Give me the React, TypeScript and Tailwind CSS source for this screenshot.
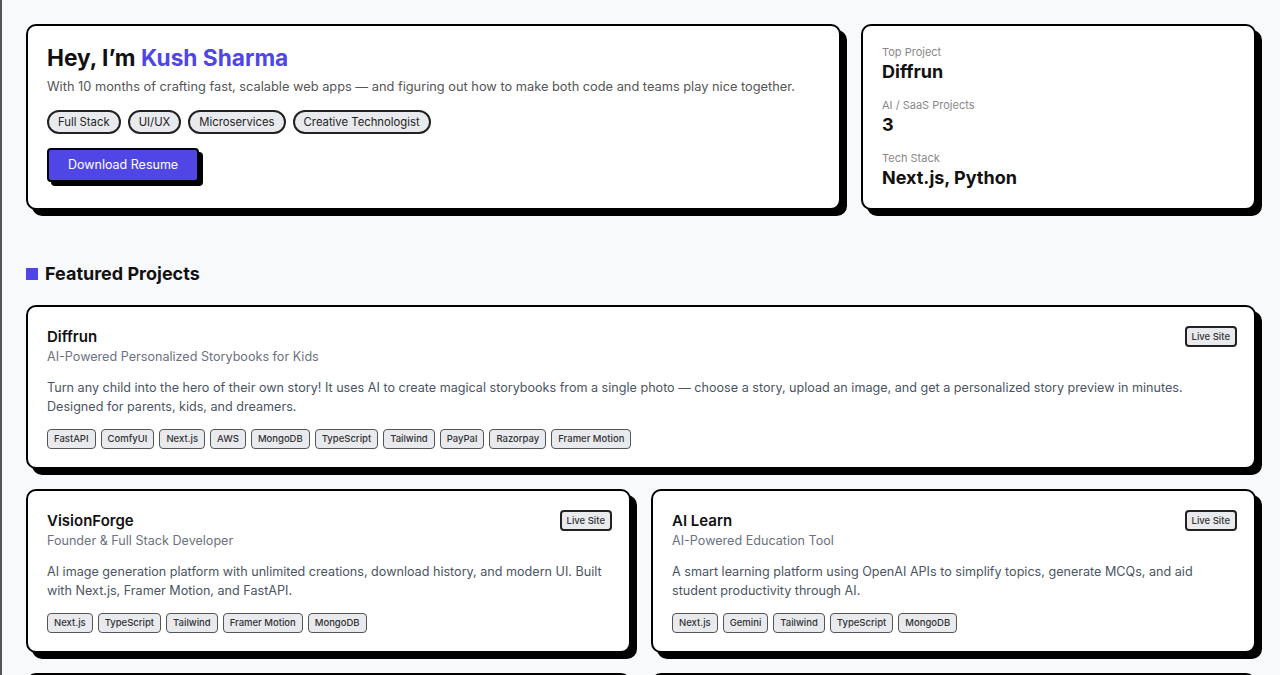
import React from "react";

const skills = ["Full Stack", "UI/UX", "Microservices", "Creative Technologist"];

const projects = [
  {
    name: "VisionForge",
    role: "Founder & Full Stack Developer",
    desc: "AI image generation platform with unlimited creations, download history, and modern UI. Built with Next.js, Framer Motion, and FastAPI.",
    tags: ["Next.js", "TypeScript", "Tailwind", "Framer Motion", "MongoDB"],
  },
  {
    name: "AI Learn",
    role: "AI-Powered Education Tool",
    desc: "A smart learning platform using OpenAI APIs to simplify topics, generate MCQs, and aid student productivity through AI.",
    tags: ["Next.js", "Gemini", "Tailwind", "TypeScript", "MongoDB"],
  },
];

function Tag({ label }: { label: string }) {
  return (
    <span className="rounded-[4px] border border-[#555] bg-[#e9eaee] px-[6px] py-[2px] text-[9.5px] font-medium leading-[14px] text-[#333]">
      {label}
    </span>
  );
}

function LiveSite() {
  return (
    <button className="-mr-[2px] rounded-[4px] border-2 border-[#222] bg-[#e9eaee] px-[5px] py-[2px] text-[9.5px] font-medium leading-[13px] text-[#333]">
      Live Site
    </button>
  );
}

function ProjectCard({ name, role, desc, tags }: { name: string; role: string; desc: string; tags: string[] }) {
  return (
    <div className="rounded-[10px] border-2 border-black bg-white px-[19px] pt-[19px] pb-[18px] shadow-[6px_6px_0_0_#000]">
      <div className="flex items-start justify-between">
        <div>
          <h3 className="text-[15px] font-semibold leading-[22px] text-[#111]">{name}</h3>
          <p className="text-[12.6px] leading-[18px] text-[#6b7280]">{role}</p>
        </div>
        <LiveSite />
      </div>
      <p className="mt-[12px] text-[12.6px] leading-[19px] text-[#4b5563]">{desc}</p>
      <div className="mt-[13px] flex flex-wrap gap-[5px]">
        {tags.map((t) => (
          <Tag key={t} label={t} />
        ))}
      </div>
    </div>
  );
}

export default function App() {
  return (
    <div className="min-h-screen border-l-2 border-[#555] bg-[#f8f9fb] px-6 pt-6 font-['Inter',sans-serif]">
      <div className="grid grid-cols-[1fr_395px] gap-5">
        <div className="rounded-[10px] border-2 border-black bg-white px-[19px] pt-[16px] pb-[26px] shadow-[6px_6px_0_0_#000]">
          <h1 className="text-[22.7px] font-bold leading-[32px] text-[#111]">
            Hey, I’m <span className="text-[#4f46e5]">Kush Sharma</span>
          </h1>
          <p className="mt-[3px] text-[12.8px] leading-[20px] text-[#555]">
            With 10 months of crafting fast, scalable web apps — and figuring out how to make both code and teams play nice together.
          </p>
          <div className="mt-[13px] flex gap-[7px]">
            {skills.map((s) => (
              <span key={s} className="rounded-full border-2 border-[#222] bg-[#e9eaee] px-[9px] py-[2px] text-[11.3px] leading-[16px] text-[#222]">
                {s}
              </span>
            ))}
          </div>
          <button className="mt-[14px] rounded-[4px] border-2 border-black bg-[#4f46e5] px-[19px] py-[7px] text-[12.5px] leading-[16px] text-white shadow-[4px_4px_0_0_#000]">
            Download Resume
          </button>
        </div>
        <div className="rounded-[10px] border-2 border-black bg-white px-[19px] pt-[19px] pb-[17px] shadow-[6px_6px_0_0_#000]">
          <div className="flex flex-col gap-[13px]">
            <div>
              <p className="text-[11px] leading-[14px] text-[#888]">Top Project</p>
              <p className="text-[18px] font-bold leading-[26px] text-[#111]">Diffrun</p>
            </div>
            <div>
              <p className="text-[11px] leading-[14px] text-[#888]">AI / SaaS Projects</p>
              <p className="text-[18px] font-bold leading-[26px] text-[#111]">3</p>
            </div>
            <div>
              <p className="text-[11px] leading-[14px] text-[#888]">Tech Stack</p>
              <p className="text-[18px] font-bold leading-[26px] text-[#111]">Next.js, Python</p>
            </div>
          </div>
        </div>
      </div>

      <h2 className="mt-[51px] flex items-center gap-[7px] text-[18px] font-bold leading-[26px] text-[#111]">
        <span className="h-3 w-3 bg-[#4f46e5]" />
        Featured Projects
      </h2>

      <div className="mt-[18px] flex flex-col gap-5">
        <ProjectCard
          name="Diffrun"
          role="AI-Powered Personalized Storybooks for Kids"
          desc="Turn any child into the hero of their own story! It uses AI to create magical storybooks from a single photo — choose a story, upload an image, and get a personalized story preview in minutes. Designed for parents, kids, and dreamers."
          tags={["FastAPI", "ComfyUI", "Next.js", "AWS", "MongoDB", "TypeScript", "Tailwind", "PayPal", "Razorpay", "Framer Motion"]}
        />
        <div className="grid grid-cols-2 gap-5">
          {projects.map((p) => (
            <ProjectCard key={p.name} {...p} />
          ))}
        </div>
        <div className="grid grid-cols-2 gap-5">
          <div className="h-[160px] rounded-[10px] border-2 border-black bg-white shadow-[6px_6px_0_0_#000]" />
          <div className="h-[160px] rounded-[10px] border-2 border-black bg-white shadow-[6px_6px_0_0_#000]" />
        </div>
      </div>
    </div>
  );
}
